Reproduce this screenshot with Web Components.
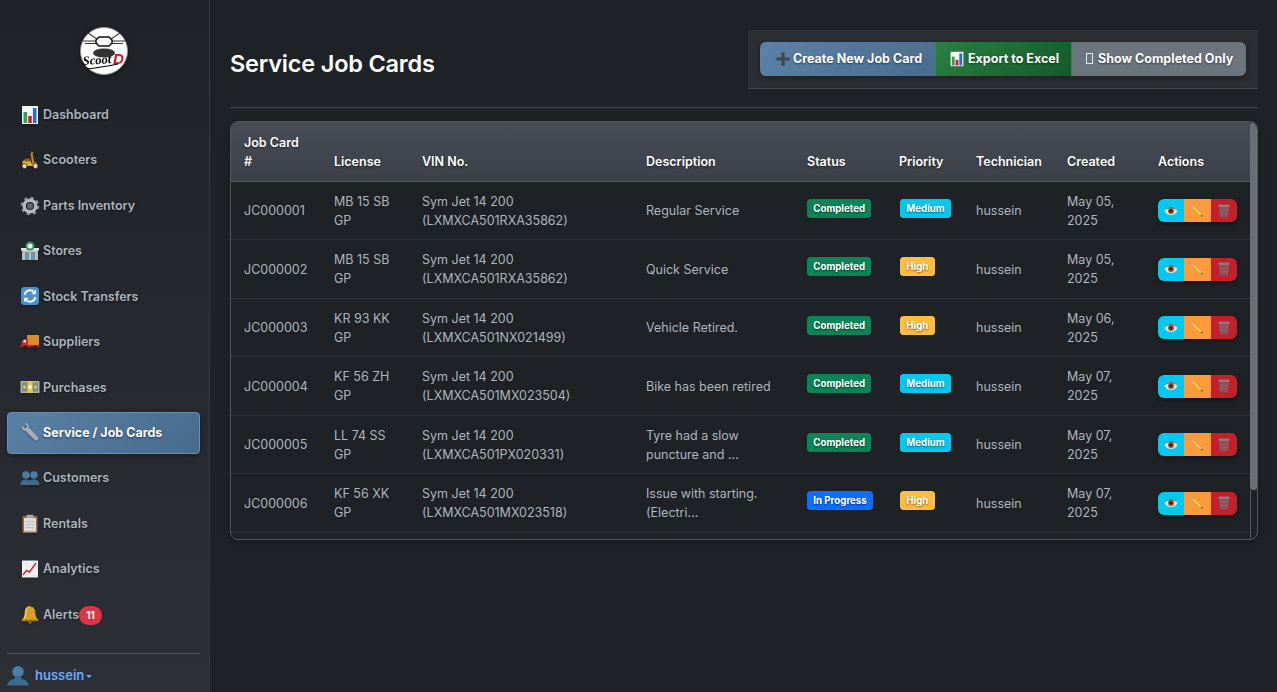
<!DOCTYPE html>
<html lang="en"><head><meta charset="utf-8"><title>Service Job Cards</title>
<style>html,body{margin:0;height:100%;background:#1e2227;overflow:hidden;font-family:Inter,"Liberation Sans",sans-serif}</style></head>
<body>
<app-shell>
  <side-bar slot="side">
    <nav-item icon="chart">Dashboard</nav-item>
    <nav-item icon="scooter">Scooters</nav-item>
    <nav-item icon="gear">Parts Inventory</nav-item>
    <nav-item icon="store">Stores</nav-item>
    <nav-item icon="refresh">Stock Transfers</nav-item>
    <nav-item icon="truck">Suppliers</nav-item>
    <nav-item icon="money">Purchases</nav-item>
    <nav-item icon="wrench" active>Service / Job Cards</nav-item>
    <nav-item icon="people">Customers</nav-item>
    <nav-item icon="clipboard">Rentals</nav-item>
    <nav-item icon="graph">Analytics</nav-item>
    <nav-item icon="bell" badge="11">Alerts</nav-item>
  </side-bar>
  <page-header title-text="Service Job Cards">
    <tool-btn kind="blue" icon="plus">Create New Job Card</tool-btn>
    <tool-btn kind="green" icon="chart">Export to Excel</tool-btn>
    <tool-btn kind="gray" box>Show Completed Only</tool-btn>
  </page-header>
  <job-table>
    <job-row id-no="JC000001" plate="MB 15 SB GP" vin="(LXMXCA501RXA35862)" desc="Regular Service" status="Completed" priority="Medium" tech="hussein" date="May 05, 2025"></job-row>
    <job-row id-no="JC000002" plate="MB 15 SB GP" vin="(LXMXCA501RXA35862)" desc="Quick Service" status="Completed" priority="High" tech="hussein" date="May 05, 2025"></job-row>
    <job-row id-no="JC000003" plate="KR 93 KK GP" vin="(LXMXCA501NX021499)" desc="Vehicle Retired." status="Completed" priority="High" tech="hussein" date="May 06, 2025"></job-row>
    <job-row id-no="JC000004" plate="KF 56 ZH GP" vin="(LXMXCA501MX023504)" desc="Bike has been retired" status="Completed" priority="Medium" tech="hussein" date="May 07, 2025"></job-row>
    <job-row id-no="JC000005" plate="LL 74 SS GP" vin="(LXMXCA501PX020331)" desc="Tyre had a slow puncture and ..." status="Completed" priority="Medium" tech="hussein" date="May 07, 2025"></job-row>
    <job-row id-no="JC000006" plate="KF 56 XK GP" vin="(LXMXCA501MX023518)" desc="Issue with starting. (Electri..." status="In Progress" priority="High" tech="hussein" date="May 07, 2025"></job-row>
  </job-table>
</app-shell>
<script>
const ICONS={
chart:'<rect x="2" y="1" width="16" height="18" fill="#f4f6f6"/><rect x="3.5" y="7" width="3.6" height="11" fill="#2ea44f"/><rect x="8.2" y="11" width="3.6" height="7" fill="#d0202a"/><rect x="12.9" y="3" width="3.6" height="15" fill="#2a6fc4"/>',
scooter:'<path d="M11.500 1.500l2.300 1-1.200.8 1.800 9.700h-2.200L10.500 4.500z" fill="#b8862d"/><path d="M2 12c2-2.500 6-3 8.500-1.500l.8 2.500c1 1 3 .5 3.700-.8l2 .8-1 3H4z" fill="#e3ad30"/><rect x="4.500" y="8.500" width="6" height="3" rx="1.200" fill="#8d5a24"/><circle cx="4.500" cy="16" r="2.500" fill="#e8d9b5" stroke="#444" stroke-width=".9"/><circle cx="15.500" cy="16" r="2.500" fill="#e8d9b5" stroke="#444" stroke-width=".9"/>',
gear:'<circle cx="10" cy="10" r="7.600" fill="none" stroke="#8f9397" stroke-width="3.400" stroke-dasharray="3 3"/><circle cx="10" cy="10" r="5.800" fill="none" stroke="#b4b7ba" stroke-width="3.400"/><circle cx="10" cy="10" r="3" fill="#63676c"/>',
store:'<rect x="2" y="8" width="16" height="11" fill="#b9bec2"/><rect x="1" y="7" width="18" height="2.500" fill="#dfe3e5"/><rect x="5" y="11" width="10" height="8" fill="#6f93a8"/><rect x="9.400" y="11" width="1.200" height="8" fill="#dfe3e5"/><circle cx="10" cy="5" r="4.600" fill="#2f8f5b"/><circle cx="10" cy="5" r="2.600" fill="#eef3ef"/>',
refresh:'<rect x="1" y="1" width="18" height="18" rx="3.500" fill="#4d8fc9"/><path d="M4.600 9A5.500 5.500 0 0 1 14.300 6.300M15.400 11A5.500 5.500 0 0 1 5.700 13.700" fill="none" stroke="#eef5fb" stroke-width="2"/><path d="M16 3.500v4.700h-4.700zM4 16.500v-4.700h4.700z" fill="#eef5fb"/>',
truck:'<rect x="7" y="3" width="12" height="10" fill="#dd8a2d"/><path d="M1 13l1-4 2-2h4v7H1z" fill="#cf2a2a"/><rect x="0.500" y="13" width="19" height="2.200" fill="#b92222"/><rect x="3.500" y="8" width="2.500" height="2.500" fill="#cfe3ee"/><circle cx="5" cy="15.500" r="2" fill="#222"/><circle cx="15" cy="15.500" r="2" fill="#222"/>',
money:'<rect x="0.500" y="4" width="19" height="12" fill="#a9b698"/><rect x="2" y="5.500" width="16" height="9" fill="#7f8f70"/><rect x="7.500" y="4" width="5" height="12" fill="#e8c64e"/><circle cx="10" cy="10" r="2.300" fill="#f3ecc9"/><circle cx="4.500" cy="10" r="1.500" fill="#c5cfb6"/><circle cx="15.500" cy="10" r="1.500" fill="#c5cfb6"/>',
wrench:'<path d="M2.200 2.600L5 5.400l1.800-.6.500-1.800L4.600.6C7-.4 9.200 1.600 8.600 4.200L18 14.200c1.300 1.700-1.300 4.300-3 2.900L5.400 7.700C2.900 8.300 1 6 2.200 2.600z" fill="#a9aeb3"/>',
people:'<circle cx="6" cy="7" r="3.800" fill="#4e7ba1"/><circle cx="14" cy="7" r="3.800" fill="#4e7ba1"/><path d="M0.500 17c0-4 2-5.500 5.500-5.500 1.500 0 2.800.3 3.800 1 1-.7 2.400-1 4-1 3.500 0 5.500 1.500 5.500 5.500z" fill="#3f6a8e"/>',
clipboard:'<rect x="2.500" y="2" width="15" height="17" rx="1" fill="#9d6b3f"/><rect x="4" y="4" width="12" height="13.500" fill="#dcdcdc"/><rect x="6.500" y="0.800" width="7" height="3" rx=".8" fill="#a8acb0"/><rect x="5.500" y="7" width="9" height="1" fill="#c2c2c2"/><rect x="5.500" y="10" width="9" height="1" fill="#c2c2c2"/><rect x="5.500" y="13" width="9" height="1" fill="#c2c2c2"/>',
graph:'<rect x="2" y="1.500" width="16" height="17" fill="#eef0f0"/><path d="M3 16l3.500-4.500 3 1.500L16 4" fill="none" stroke="#c92a2a" stroke-width="1.400"/>',
bell:'<path d="M10 1.500c-3.700 0-5.300 3-5.300 6 0 4-1.200 5.500-3.200 7.500h17c-2-2-3.200-3.500-3.200-7.500 0-3-1.600-6-5.300-6z" fill="#d9a12c"/><path d="M10 1.500c-1.800 0-3 1-3.800 2.500C6 7 6 11 4 14.500" fill="none" stroke="#f3cf72" stroke-width="1.200"/><rect x="1.500" y="14.500" width="17" height="1.800" rx=".9" fill="#a97518"/><circle cx="10" cy="17.300" r="1.700" fill="#8a5e13"/>',
user:'<circle cx="10" cy="6.500" r="4.800" fill="#4d7ea6"/><path d="M7.600 10h4.800l.6 2.200c3 1 5.500 2 6 5.800H1c.5-3.800 3-4.800 6-5.800z" fill="#3c6b92"/>',
plus:'<path d="M8 1.500h4V8h6.500v4H12v6.500H8V12H1.500V8H8z" fill="#43484e"/>',
eye:'<path d="M.5 10c2.500-4.200 5.800-5.800 9.500-5.800s7 1.600 9.500 5.800c-2.500 4.200-5.800 5.800-9.500 5.800S3 14.200.5 10z" fill="#e4e2dc"/><circle cx="10" cy="10" r="4.300" fill="#8f5d2d"/><circle cx="10" cy="10" r="2" fill="#1c1c1c"/><path d="M.5 10c2.500-4.200 5.800-5.800 9.500-5.800s7 1.600 9.500 5.800c-3-2.800-6-3.800-9.500-3.800S3.500 7.200.5 10z" fill="#6b6460"/>',
pencil:'<path d="M2.800 5.200L5.200 2.800 17 14.400l.9 3.500-3.500-.9z" fill="#f0cf5e" stroke="#bf8420" stroke-width=".7"/><path d="M2.800 5.200L5.200 2.800 3.800 1.500a1.600 1.600 0 0 0-2.400 2.400z" fill="#e39aa8"/><path d="M3.800 6.200l2.400-2.400 1 1-2.400 2.400z" fill="#c9c9c9"/><path d="M15 17.200l2.200-2.200.7 2.900z" fill="#5a4a3a"/>',
trash:'<rect x="3" y="2" width="14" height="3" rx="1" fill="#94797d"/><path d="M3.800 5h12.400l-1 13H4.800z" fill="#85525a"/><path d="M6 6l.6 11M10 6v11M14 6l-.6 11M4.500 9h11M4.700 13h10.600" stroke="#9e6e75" stroke-width=".6"/>'
};
const svg=(n,s)=>`<svg width="${s}" height="${s}" viewBox="0 0 20 20" aria-hidden="true">${ICONS[n]||''}</svg>`;

class AppShell extends HTMLElement{constructor(){super();this.attachShadow({mode:'open'}).innerHTML=`<style>
:host{display:grid;grid-template-columns:210px 1fr;height:692px;overflow:hidden}
main{padding:30px 19px 0 20px;min-width:0;background:#1e2227}
</style><slot name="side"></slot><main><slot></slot></main>`}}
customElements.define('app-shell',AppShell);

class SideBar extends HTMLElement{constructor(){super();this.attachShadow({mode:'open'}).innerHTML=`<style>
:host{display:flex;flex-direction:column;height:692px;box-sizing:border-box;background:linear-gradient(180deg,#1f2328,#2c2f36);border-right:1px solid #363a40;padding:0 9px 0 7px;font:500 12.500px/19.500px Inter,"Liberation Sans",sans-serif}
.logo{display:flex;justify-content:center;padding:27px 0 0;height:94px;box-sizing:border-box;flex:none}
.logo svg{display:block;filter:drop-shadow(0 1px 2px rgba(0,0,0,.5))}
nav{display:flex;flex-direction:column;gap:4px;flex:1}
.user{display:flex;align-items:center;border-top:1px solid #55585e;height:39px;box-sizing:border-box;padding-top:5px;color:#6ea8fe;font-weight:600;font-size:13px;gap:5px;flex:none}
.user svg{margin-left:-1px;flex:none}
.caret{width:0;height:0;border:3px solid transparent;border-top-color:#6ea8fe;border-bottom:0;margin-left:-3px;margin-top:2px}
</style>
<div class="logo"><svg width="48" height="48" viewBox="0 0 48 48">
<circle cx="24" cy="24" r="23.500" fill="#fff" stroke="#999" stroke-width="1"/>
<path d="M3 14h13M32 14h13M5 16.500h11M32 16.500h11" stroke="#333" stroke-width="1.200"/>
<path d="M8 6l9 6M40 6l-9 6" stroke="#444" stroke-width="1.200"/>
<path d="M19 10h10l3 3v3l-3 3H19l-3-3v-3z" fill="#fff" stroke="#111" stroke-width="1.500"/>
<ellipse cx="24" cy="26" rx="11" ry="4.500" fill="#333"/>
<text x="3" y="38" font-family="Liberation Serif,serif" font-style="italic" font-weight="700" font-size="12.500" fill="#000" transform="rotate(-4 3 38)">Scoot</text>
<text x="33" y="37" font-family="Liberation Sans,sans-serif" font-style="italic" font-weight="700" font-size="15" fill="#d3121f">D</text>
<path d="M6 42c10-1 22-3 32-5" stroke="#000" stroke-width="1.200" fill="none"/>
</svg></div>
<nav><slot></slot></nav>
<div class="user">${svg('user',24)}<span>hussein</span><i class="caret"></i></div>`}}
customElements.define('side-bar',SideBar);

class NavItem extends HTMLElement{constructor(){super();this.attachShadow({mode:'open'})}
connectedCallback(){const b=this.getAttribute('badge');this.shadowRoot.innerHTML=`<style>
:host{display:flex;align-items:center;height:41.450px;box-sizing:border-box;padding-left:12px;border:1px solid transparent;border-radius:4px;color:#adb5bd;font-weight:600;text-shadow:0 1px 2px rgba(0,0,0,.5);white-space:nowrap}
:host([active]){background:linear-gradient(135deg,#5a80a5,#486b8d);border-color:#6a8fb3;color:#fff;font-weight:700;box-shadow:0 2px 6px rgba(0,0,0,.35)}
svg{flex:none;margin-right:3px;filter:drop-shadow(0 1px 1px rgba(0,0,0,.3))}
.badge{display:inline-block;background:#dc3545;color:#fff;font:700 10px/19px Inter,"Liberation Sans",sans-serif;min-width:23px;height:19px;border-radius:10px;text-align:center;margin-top:1px;text-shadow:none}
</style>${svg(this.getAttribute('icon'),20)}<slot></slot>${b?`<span class="badge">${b}</span>`:''}`}}
customElements.define('nav-item',NavItem);

class PageHeader extends HTMLElement{constructor(){super();this.attachShadow({mode:'open'})}
connectedCallback(){this.shadowRoot.innerHTML=`<style>
:host{display:flex;justify-content:space-between;align-items:flex-start;box-sizing:border-box;border-bottom:1px solid #44474d;margin-bottom:13px;height:78px}
h1{margin:19px 0 0;color:#fff;font:600 23.500px/30px Inter,"Liberation Sans",sans-serif;letter-spacing:-.2px}
.bar{display:flex;padding:12px;background:#2a2d32;border-bottom:1px solid #44474d;width:510px;box-sizing:border-box;height:59px}
.grp{display:flex;border-radius:6px;overflow:hidden;height:34px;box-shadow:0 2px 5px rgba(0,0,0,.3)}
</style><h1>${this.getAttribute('title-text')}</h1><div class="bar"><div class="grp"><slot></slot></div></div>`}}
customElements.define('page-header',PageHeader);

class ToolBtn extends HTMLElement{constructor(){super();this.attachShadow({mode:'open'})}
connectedCallback(){const ic=this.getAttribute('icon');this.shadowRoot.innerHTML=`<style>
:host{display:flex;align-items:center;box-sizing:border-box;color:#fff;font:700 12.500px/19.500px Inter,"Liberation Sans",sans-serif;text-shadow:0 1px 2px rgba(0,0,0,.5);white-space:nowrap}
:host([kind=blue]){background:linear-gradient(135deg,#5c82a8,#4a6c8e);width:175px;padding-left:15px;gap:2px}
:host([kind=green]){background:linear-gradient(135deg,#2b8042,#135a2b);width:137px;padding-left:13px;gap:3px;border:solid #2f8a49;border-width:0 1px}
:host([kind=gray]){background:#6c757d;width:174px;padding-left:14px;gap:5px}
svg{flex:none}
.box{width:7px;height:11px;box-sizing:border-box;border:1px solid #e4e6e8;flex:none;margin-top:-1px}
</style>${ic?svg(ic,16):''}${this.hasAttribute('box')?'<i class="box"></i>':''}<slot></slot>`}}
customElements.define('tool-btn',ToolBtn);

const COLS='90px 88px 224px 161px 92px 77px 91px 91px 105px';
class JobTable extends HTMLElement{constructor(){super();const h=['Job Card #','License','VIN No.','Description','Status','Priority','Technician','Created','Actions'];
this.attachShadow({mode:'open'}).innerHTML=`<style>
:host{display:flex;border:1px solid #53575e;border-radius:8px;height:419px;box-sizing:border-box;overflow:hidden;box-shadow:0 2px 6px rgba(0,0,0,.25)}
.s{width:1019px;flex:none;background:#1e2126}
.track{flex:1;display:flex;flex-direction:column}
.thumb{height:368px;background:#6a6e75;border-radius:3px;flex:none}
.rest{flex:1;border-left:1px solid #53575e}
.h{display:grid;grid-template-columns:${COLS};background:linear-gradient(180deg,#484c55,#3c4048);border-bottom:1px solid #565a61;align-items:end;height:59.750px;box-sizing:border-box}
.h div{padding:0 13px 10px;color:#fff;font:600 12.500px/19px Inter,"Liberation Sans",sans-serif;text-shadow:0 1px 2px rgba(0,0,0,.5)}
</style><div class="s"><div class="h">${h.map(t=>`<div>${t}</div>`).join('')}</div><slot></slot></div><div class="track"><div class="thumb"></div><div class="rest"></div></div>`}}
customElements.define('job-table',JobTable);

class StatusPill extends HTMLElement{constructor(){super();this.attachShadow({mode:'open'}).innerHTML=`<style>
:host{display:inline-block;height:19px;box-sizing:border-box;padding:0 6.300px;border-radius:3.500px;color:#fff;font:700 9.700px/19px Inter,"Liberation Sans",sans-serif;text-shadow:0 1px 2px rgba(0,0,0,.55);white-space:nowrap}
:host([c=Completed]){background:#0b8457}
:host([c="In Progress"]){background:#0d6efd}
:host([c=Medium]){background:#04c8ef;margin-left:1px}
:host([c=High]){background:#ffbd3d;margin-left:1px}
</style><slot></slot>`}}
customElements.define('status-pill',StatusPill);

class JobRow extends HTMLElement{constructor(){super();this.attachShadow({mode:'open'})}
connectedCallback(){const a=n=>this.getAttribute(n);this.shadowRoot.innerHTML=`<style>
:host{display:grid;grid-template-columns:${COLS};align-items:center;height:58.500px;box-sizing:border-box;border-bottom:1px solid #2c3036;color:#adb5bd;font:400 12.500px/19px Inter,"Liberation Sans",sans-serif}
.c{padding:0 13px}
.p{padding-right:6px;margin-top:-5px;display:flex;align-items:flex-start}
.acts{display:flex;width:79px;height:23px;border-radius:6px;overflow:hidden;box-shadow:0 2px 4px rgba(0,0,0,.4)}
.acts span{flex:1;display:flex;align-items:center;justify-content:center}
.v{background:#04c8ef}.e{background:#fd9a3b}.d{background:#c51f2b}
</style>
<div class="c">${a('id-no')}</div><div class="c">${a('plate')}</div><div class="c">Sym Jet 14 200<br>${a('vin')}</div><div class="c">${a('desc')}</div>
<div class="c"><div class="p"><status-pill c="${a('status')}">${a('status')}</status-pill></div></div>
<div class="c"><div class="p"><status-pill c="${a('priority')}">${a('priority')}</status-pill></div></div>
<div class="c">${a('tech')}</div><div class="c">${a('date')}</div>
<div class="c"><div class="acts"><span class="v">${svg('eye',14)}</span><span class="e">${svg('pencil',14)}</span><span class="d">${svg('trash',16)}</span></div></div>`}}
customElements.define('job-row',JobRow);
</script>
</body></html>
